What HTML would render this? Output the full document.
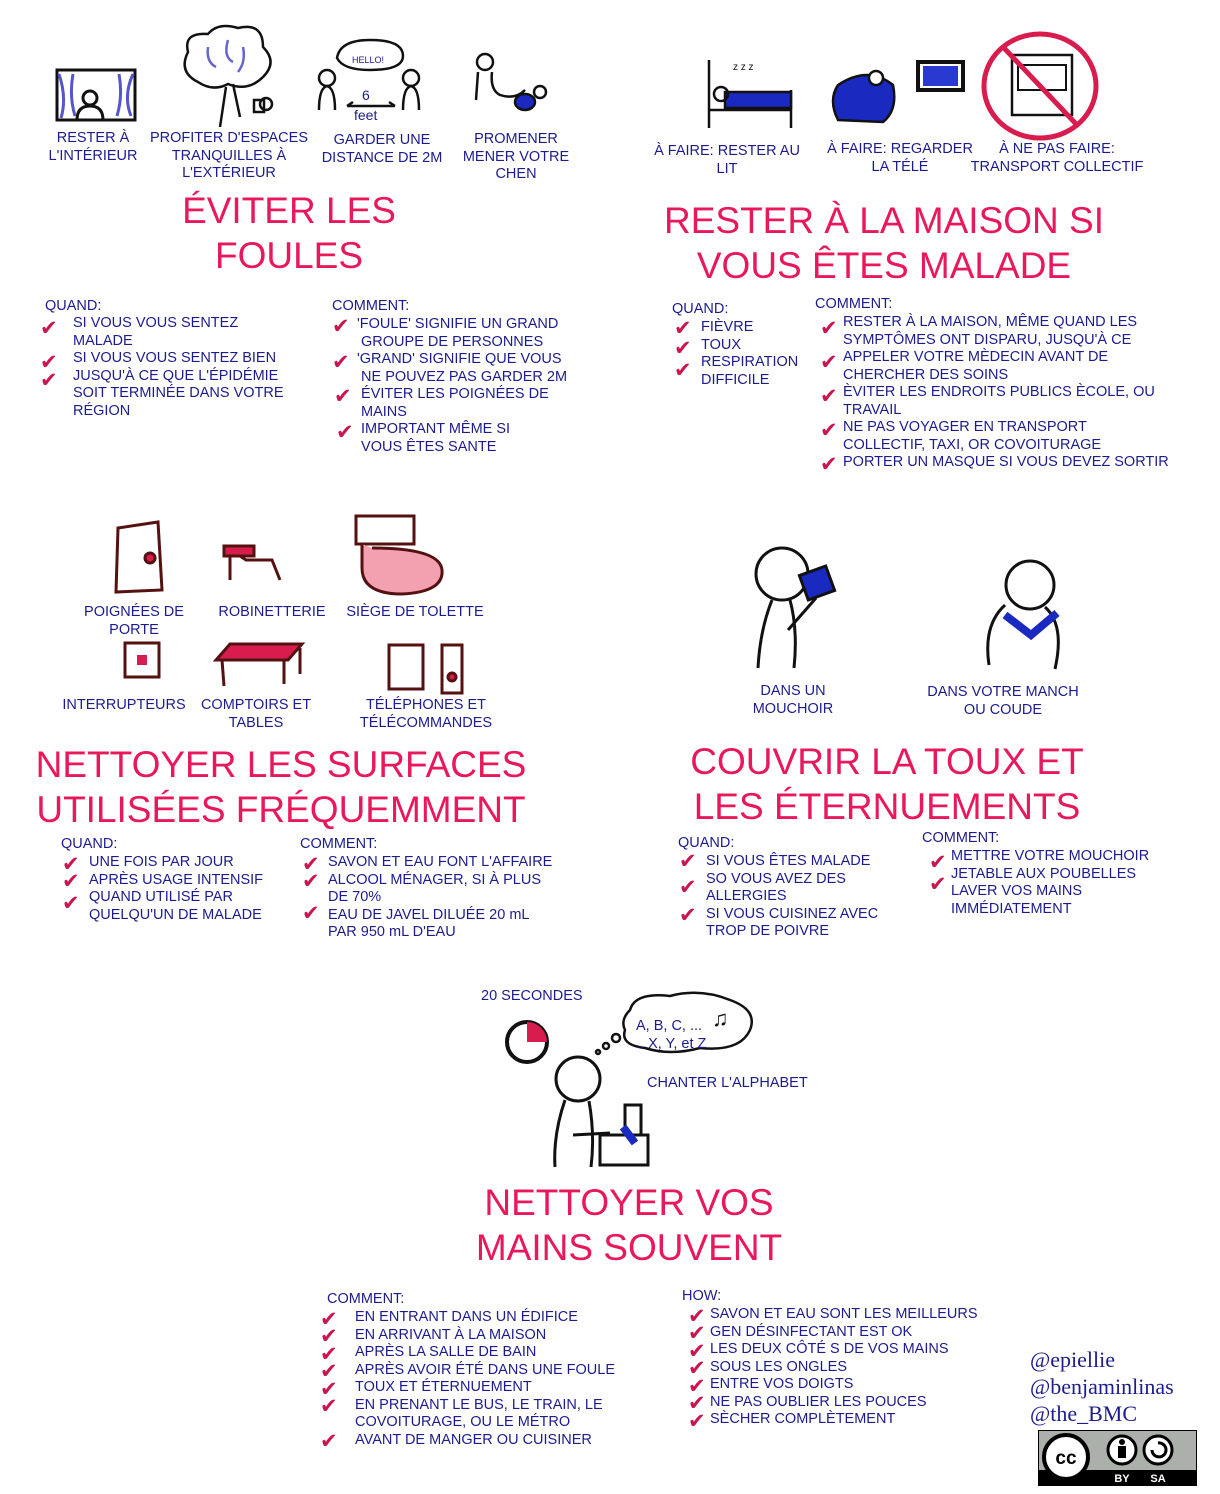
<!DOCTYPE html>
<html><head><meta charset="utf-8">
<style>
body{margin:0;width:1220px;height:1494px;background:#fff;position:relative;overflow:hidden;font-family:"Liberation Sans",sans-serif;color:#1c1c8c}
.a{position:absolute;font-size:14.5px;line-height:17.5px;white-space:nowrap}
.c{text-align:center;transform:translateX(-50%)}
.t{position:absolute;color:#e8185a;font-size:37px;line-height:45px;text-align:center;transform:translateX(-50%);white-space:nowrap}
.k{position:absolute;color:#c8174e;font-size:21px;line-height:20px;font-family:"DejaVu Sans",sans-serif}
svg{position:absolute;overflow:visible}
.h{position:absolute;font-family:"Liberation Serif",serif;font-size:22px;line-height:27px;color:#1c1c8c}
</style></head><body>

<svg style="left:55px;top:68px" width="85" height="55" viewBox="0 0 85 55" fill="none" stroke="#111" stroke-width="3"><rect x="2" y="2" width="78" height="50"/><path d="M4 6 Q12 30 6 50 M18 6 Q14 28 20 48 M78 6 Q68 28 76 48 M64 6 Q68 28 62 48" stroke="#55c" stroke-width="3"/><circle cx="35" cy="30" r="7"/><path d="M22 52 Q22 38 35 38 Q48 38 48 52"/></svg>
<svg style="left:178px;top:22px" width="110" height="108" viewBox="0 0 110 108" fill="none" stroke="#111" stroke-width="2.5"><path d="M20 60 Q0 50 10 30 Q5 10 30 12 Q40 0 60 6 Q85 0 85 25 Q100 40 85 55 Q70 70 50 62 Q35 70 20 60Z"/><path d="M30 25 Q28 40 38 45 M50 18 Q45 35 55 40 M65 25 Q68 40 60 50" stroke="#66c"/><path d="M42 105 L48 65 M62 95 L55 62"/><circle cx="88" cy="82" r="6"/><rect x="76" y="78" width="10" height="12"/></svg>
<svg style="left:315px;top:38px" width="110" height="80" viewBox="0 0 110 80" fill="none" stroke="#111" stroke-width="2.5"><path d="M22 20 Q25 2 55 2 Q88 2 88 18 Q88 32 55 32 Q28 32 22 20Z"/><circle cx="12" cy="40" r="8"/><path d="M4 72 Q4 50 12 48 Q20 50 20 72"/><circle cx="96" cy="40" r="8"/><path d="M88 72 Q88 50 96 48 Q104 50 104 72"/><path d="M32 68 L80 68 M32 68 L38 64 M80 68 L74 64"/></svg>
<div class="a" style="left:352px;top:52px;font-size:9px">HELLO!</div>
<div class="a" style="left:362px;top:87px;font-size:14px">6</div>
<div class="a" style="left:354px;top:107px;font-size:14px">feet</div>
<svg style="left:470px;top:50px" width="85" height="70" viewBox="0 0 85 70" fill="none" stroke="#111" stroke-width="2.5"><circle cx="15" cy="12" r="8"/><path d="M8 22 L6 50 M22 22 Q20 40 30 45 Q45 50 55 40"/><ellipse cx="55" cy="52" rx="10" ry="8" fill="#1a2ac0"/><circle cx="70" cy="42" r="6"/></svg>

<div class="a c" style="left:93px;top:130px">RESTER À<br>L'INTÉRIEUR</div>
<div class="a c" style="left:229px;top:130px">PROFITER D'ESPACES<br>TRANQUILLES À<br>L'EXTÉRIEUR</div>
<div class="a c" style="left:382px;top:132px">GARDER UNE<br>DISTANCE DE 2M</div>
<div class="a c" style="left:516px;top:131px">PROMENER<br>MENER VOTRE<br>CHEN</div>
<div class="t" style="left:289px;top:188px">ÉVITER LES<br>FOULES</div>

<svg style="left:705px;top:50px" width="90" height="80" viewBox="0 0 90 80" fill="none" stroke="#111" stroke-width="2.5"><path d="M4 10 L4 78 M86 40 L86 78 M4 60 L86 60"/><rect x="20" y="42" width="66" height="16" fill="#1a2ac0"/><circle cx="16" cy="44" r="7"/><text x="28" y="20" font-size="10" fill="#111" stroke="none">z z z</text></svg>
<svg style="left:828px;top:60px" width="140" height="70" viewBox="0 0 140 70" fill="none" stroke="#111" stroke-width="2.5"><path d="M10 60 Q0 40 10 25 Q40 5 65 25 Q70 50 55 62 Z" fill="#1a2ac0"/><circle cx="48" cy="18" r="7" fill="#fff"/><rect x="90" y="2" width="45" height="28" stroke="#111" stroke-width="4"/><rect x="95" y="6" width="35" height="20" fill="#2a3ad0" stroke="none"/></svg>
<svg style="left:982px;top:30px" width="120" height="112" viewBox="0 0 120 112" fill="none" stroke-width="5"><rect x="30" y="25" width="60" height="60" stroke="#111" stroke-width="2.5"/><rect x="36" y="35" width="48" height="25" stroke="#111" stroke-width="2"/><ellipse cx="58" cy="56" rx="56" ry="52" stroke="#d81d4e"/><path d="M22 18 L96 96" stroke="#d81d4e"/></svg>
<div class="a c" style="left:727px;top:143px">À FAIRE: RESTER AU<br>LIT</div>
<div class="a c" style="left:900px;top:141px">À FAIRE: REGARDER<br>LA TÉLÉ</div>
<div class="a c" style="left:1057px;top:141px">À NE PAS FAIRE:<br>TRANSPORT COLLECTIF</div>
<div class="t" style="left:884px;top:198px">RESTER À LA MAISON SI<br>VOUS ÊTES MALADE</div>

<div class="a" style="left:45px;top:298px">QUAND:</div>
<div class="a" style="left:73px;top:315px">SI VOUS VOUS SENTEZ<br>MALADE<br>SI VOUS VOUS SENTEZ BIEN<br>JUSQU'À CE QUE L'ÉPIDÉMIE<br>SOIT TERMINÉE DANS VOTRE<br>RÉGION</div>
<div class="k" style="left:40px;top:318px">✔</div><div class="k" style="left:40px;top:352px">✔</div><div class="k" style="left:40px;top:370px">✔</div>

<div class="a" style="left:332px;top:298px">COMMENT:</div>
<div class="a" style="left:357px;top:316px">'FOULE' SIGNIFIE UN GRAND<br>&nbsp;GROUPE DE PERSONNES<br>'GRAND' SIGNIFIE QUE VOUS<br>&nbsp;NE POUVEZ PAS GARDER 2M<br>&nbsp;ÉVITER LES POIGNÉES DE<br>&nbsp;MAINS<br>&nbsp;IMPORTANT MÊME SI<br>&nbsp;VOUS ÊTES SANTE</div>
<div class="k" style="left:332px;top:316px">✔</div><div class="k" style="left:332px;top:352px">✔</div><div class="k" style="left:334px;top:386px">✔</div><div class="k" style="left:336px;top:422px">✔</div>

<div class="a" style="left:672px;top:301px">QUAND:</div>
<div class="a" style="left:701px;top:319px">FIÈVRE<br>TOUX<br>RESPIRATION<br>DIFFICILE</div>
<div class="k" style="left:674px;top:318px">✔</div><div class="k" style="left:674px;top:338px">✔</div><div class="k" style="left:674px;top:360px">✔</div>

<div class="a" style="left:815px;top:296px">COMMENT:</div>
<div class="a" style="left:843px;top:314px">RESTER À LA MAISON, MÊME QUAND LES<br>SYMPTÔMES ONT DISPARU, JUSQU'À CE<br>APPELER VOTRE MÈDECIN AVANT DE<br>CHERCHER DES SOINS<br>ÈVITER LES ENDROITS PUBLICS ÈCOLE, OU<br>TRAVAIL<br>NE PAS VOYAGER EN TRANSPORT<br>COLLECTIF, TAXI, OR COVOITURAGE<br>PORTER UN MASQUE SI VOUS DEVEZ SORTIR</div>
<div class="k" style="left:820px;top:318px">✔</div><div class="k" style="left:820px;top:352px">✔</div><div class="k" style="left:820px;top:386px">✔</div><div class="k" style="left:820px;top:420px">✔</div><div class="k" style="left:820px;top:454px">✔</div>

<svg style="left:110px;top:520px" width="60" height="75" viewBox="0 0 60 75" fill="none" stroke="#511" stroke-width="3"><path d="M8 8 L48 2 L52 70 L6 72 Z"/><circle cx="40" cy="38" r="5" fill="#d81d4e"/></svg>
<svg style="left:220px;top:540px" width="70" height="55" viewBox="0 0 70 55" fill="none" stroke="#511" stroke-width="3"><rect x="4" y="6" width="30" height="10" fill="#d81d4e"/><path d="M10 16 L10 40 M20 16 L26 20 L52 20 L56 30 L60 40"/></svg>
<svg style="left:352px;top:508px" width="95" height="90" viewBox="0 0 95 90" fill="none" stroke="#511" stroke-width="3"><rect x="4" y="8" width="58" height="28"/><path d="M10 36 L10 60 Q10 86 50 86 Q92 84 90 62 Q88 40 20 40" fill="#f3a0b0"/></svg>
<svg style="left:122px;top:640px" width="40" height="40" viewBox="0 0 40 40" fill="none" stroke="#511" stroke-width="3"><rect x="3" y="3" width="34" height="34"/><rect x="15" y="15" width="10" height="10" fill="#d81d4e" stroke="none"/></svg>
<svg style="left:212px;top:640px" width="95" height="50" viewBox="0 0 95 50" fill="none" stroke="#511" stroke-width="3"><path d="M18 4 L90 4 L76 20 L4 20 Z" fill="#d81d4e"/><path d="M10 20 L12 46 M72 20 L72 44 M88 8 L88 34"/></svg>
<svg style="left:386px;top:642px" width="80" height="52" viewBox="0 0 80 52" fill="none" stroke="#511" stroke-width="3"><rect x="3" y="3" width="34" height="44"/><rect x="56" y="3" width="20" height="48"/><circle cx="66" cy="35" r="4" fill="#d81d4e"/></svg>

<div class="a c" style="left:134px;top:604px">POIGNÉES DE<br>PORTE</div>
<div class="a c" style="left:272px;top:604px">ROBINETTERIE</div>
<div class="a c" style="left:415px;top:604px">SIÈGE DE TOLETTE</div>
<div class="a c" style="left:124px;top:697px">INTERRUPTEURS</div>
<div class="a c" style="left:256px;top:697px">COMPTOIRS ET<br>TABLES</div>
<div class="a c" style="left:426px;top:697px">TÉLÉPHONES ET<br>TÉLÉCOMMANDES</div>
<div class="t" style="left:281px;top:742px">NETTOYER LES SURFACES<br>UTILISÉES FRÉQUEMMENT</div>

<div class="a" style="left:61px;top:836px">QUAND:</div>
<div class="a" style="left:89px;top:854px">UNE FOIS PAR JOUR<br>APRÈS USAGE INTENSIF<br>QUAND UTILISÉ PAR<br>QUELQU'UN DE MALADE</div>
<div class="k" style="left:62px;top:854px">✔</div><div class="k" style="left:62px;top:871px">✔</div><div class="k" style="left:62px;top:893px">✔</div>
<div class="a" style="left:300px;top:836px">COMMENT:</div>
<div class="a" style="left:328px;top:854px">SAVON ET EAU FONT L'AFFAIRE<br>ALCOOL MÉNAGER, SI À PLUS<br>DE 70%<br>EAU DE JAVEL DILUÉE 20 mL<br>PAR 950 mL D'EAU</div>
<div class="k" style="left:302px;top:854px">✔</div><div class="k" style="left:302px;top:871px">✔</div><div class="k" style="left:302px;top:903px">✔</div>

<svg style="left:748px;top:540px" width="95" height="130" viewBox="0 0 95 130" fill="none" stroke="#111" stroke-width="3"><circle cx="34" cy="34" r="26"/><path d="M24 60 Q12 90 10 128 M42 60 Q50 90 46 128 M40 90 L68 58"/><rect x="55" y="30" width="28" height="26" fill="#1a2ac0" transform="rotate(-20 69 43)"/></svg>
<svg style="left:975px;top:555px" width="110" height="120" viewBox="0 0 110 120" fill="none" stroke="#111" stroke-width="3"><circle cx="55" cy="30" r="24"/><path d="M30 50 Q8 70 14 110 M70 52 Q90 70 80 114"/><path d="M30 60 L56 80 L82 58" stroke="#1a2ac0" stroke-width="8"/></svg>
<div class="a c" style="left:793px;top:683px">DANS UN<br>MOUCHOIR</div>
<div class="a c" style="left:1003px;top:684px">DANS VOTRE MANCH<br>OU COUDE</div>
<div class="t" style="left:887px;top:739px">COUVRIR LA TOUX ET<br>LES ÉTERNUEMENTS</div>

<div class="a" style="left:678px;top:835px">QUAND:</div>
<div class="a" style="left:706px;top:853px">SI VOUS ÊTES MALADE<br>SO VOUS AVEZ DES<br>ALLERGIES<br>SI VOUS CUISINEZ AVEC<br>TROP DE POIVRE</div>
<div class="k" style="left:679px;top:851px">✔</div><div class="k" style="left:679px;top:877px">✔</div><div class="k" style="left:679px;top:905px">✔</div>
<div class="a" style="left:922px;top:830px">COMMENT:</div>
<div class="a" style="left:951px;top:848px">METTRE VOTRE MOUCHOIR<br>JETABLE AUX POUBELLES<br>LAVER VOS MAINS<br>IMMÉDIATEMENT</div>
<div class="k" style="left:929px;top:852px">✔</div><div class="k" style="left:929px;top:874px">✔</div>

<div class="a" style="left:481px;top:988px">20 SECONDES</div>
<svg style="left:503px;top:1018px" width="50" height="50" viewBox="0 0 50 50"><circle cx="24" cy="24" r="20" fill="#fff" stroke="#111" stroke-width="4"/><path d="M24 24 L24 4 A20 20 0 0 1 44 24 Z" fill="#d81d4e"/></svg>
<svg style="left:590px;top:990px" width="170" height="70" viewBox="0 0 170 70" fill="none" stroke="#111" stroke-width="2.5"><path d="M40 20 Q45 2 80 6 Q110 -2 140 10 Q168 20 160 40 Q150 62 110 58 Q80 66 55 58 Q30 55 35 40 Q30 30 40 20Z"/><circle cx="26" cy="48" r="4"/><circle cx="16" cy="56" r="3"/><circle cx="8" cy="62" r="2"/></svg>
<div class="a" style="left:636px;top:1018px">A, B, C, ...</div>
<div class="a" style="left:636px;top:1036px">.. X, Y, et Z</div>
<div class="a" style="left:712px;top:1010px;font-size:22px;color:#111">♫</div>
<div class="a" style="left:647px;top:1075px">CHANTER L'ALPHABET</div>
<svg style="left:545px;top:1055px" width="110" height="115" viewBox="0 0 110 115" fill="none" stroke="#111" stroke-width="3"><circle cx="33" cy="24" r="22"/><path d="M20 45 Q8 80 10 112 M44 46 Q50 80 46 112 M28 80 L65 78"/><rect x="55" y="80" width="48" height="30"/><rect x="80" y="50" width="16" height="30"/><path d="M78 72 L90 88" stroke="#1a2ac0" stroke-width="8"/></svg>
<div class="t" style="left:629px;top:1180px">NETTOYER VOS<br>MAINS SOUVENT</div>

<div class="a" style="left:327px;top:1291px">COMMENT:</div>
<div class="a" style="left:355px;top:1309px">EN ENTRANT DANS UN ÉDIFICE<br>EN ARRIVANT À LA MAISON<br>APRÈS LA SALLE DE BAIN<br>APRÈS AVOIR ÉTÉ DANS UNE FOULE<br>TOUX ET ÉTERNUEMENT<br>EN PRENANT LE BUS, LE TRAIN, LE<br>COVOITURAGE, OU LE MÉTRO<br>AVANT DE MANGER OU CUISINER</div>
<div class="k" style="left:320px;top:1309px">✔</div><div class="k" style="left:320px;top:1326px">✔</div><div class="k" style="left:320px;top:1344px">✔</div><div class="k" style="left:320px;top:1361px">✔</div><div class="k" style="left:320px;top:1379px">✔</div><div class="k" style="left:320px;top:1396px">✔</div><div class="k" style="left:320px;top:1431px">✔</div>

<div class="a" style="left:682px;top:1288px">HOW:</div>
<div class="a" style="left:710px;top:1306px">SAVON ET EAU SONT LES MEILLEURS<br>GEN DÉSINFECTANT EST OK<br>LES DEUX CÔTÉ S DE VOS MAINS<br>SOUS LES ONGLES<br>ENTRE VOS DOIGTS<br>NE PAS OUBLIER LES POUCES<br>SÈCHER COMPLÈTEMENT</div>
<div class="k" style="left:688px;top:1306px">✔</div><div class="k" style="left:688px;top:1323px">✔</div><div class="k" style="left:688px;top:1341px">✔</div><div class="k" style="left:688px;top:1358px">✔</div><div class="k" style="left:688px;top:1376px">✔</div><div class="k" style="left:688px;top:1393px">✔</div><div class="k" style="left:688px;top:1411px">✔</div>

<div class="h" style="left:1030px;top:1346px">@epiellie<br>@benjaminlinas<br>@the_BMC</div>
<svg style="left:1038px;top:1430px" width="160" height="56" viewBox="0 0 160 56"><rect x="0.5" y="0.5" width="158" height="55" fill="#abb1aa" stroke="#000"/><rect x="1" y="40" width="157" height="15" fill="#000"/><circle cx="28" cy="27" r="22" fill="#fff" stroke="#000" stroke-width="4"/><text x="28" y="34" font-family="Liberation Sans" font-weight="bold" font-size="19" text-anchor="middle">cc</text><circle cx="84" cy="20" r="14" fill="#fff" stroke="#000" stroke-width="3"/><circle cx="84" cy="12" r="3"/><rect x="80" y="16" width="8" height="12"/><circle cx="120" cy="20" r="14" fill="#fff" stroke="#000" stroke-width="3"/><path d="M114 20 A7 7 0 1 0 120 13" fill="none" stroke="#000" stroke-width="3"/><text x="84" y="52" fill="#fff" font-family="Liberation Sans" font-weight="bold" font-size="11" text-anchor="middle">BY</text><text x="120" y="52" fill="#fff" font-family="Liberation Sans" font-weight="bold" font-size="11" text-anchor="middle">SA</text></svg>
</body></html>
